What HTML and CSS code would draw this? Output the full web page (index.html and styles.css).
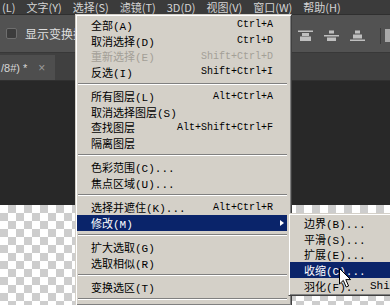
FILE: index.html
```html
<!DOCTYPE html>
<html lang="zh-CN">
<head>
  <meta charset="UTF-8">
  <meta name="viewport" content="width=device-width, initial-scale=1.0">
  <link rel="stylesheet" href="styles.css">
</head>
<body>

<div class="app">
  <div class="menubar">
    <span>(L)</span>
    <span>文字(Y)</span>
    <span>选择(S)</span>
    <span>滤镜(T)</span>
    <span>3D(D)</span>
    <span>视图(V)</span>
    <span>窗口(W)</span>
    <span>帮助(H)</span>
  </div>

  <div class="options">
    <span class="checkbox"></span>
    <span class="option-label">显示变换控件</span>
    <div class="align-tools">
      <svg class="tool-icon" viewBox="0 0 17 12">
        <rect x="1" y="0.5" width="15" height="1.5"/>
        <rect x="5" y="3" width="7" height="3"/>
        <rect x="3" y="6.5" width="11" height="4.5"/>
      </svg>
      <svg class="tool-icon" viewBox="0 0 17 12">
        <rect x="6" y="0.5" width="5" height="3"/>
        <rect x="1" y="5" width="15" height="1.5"/>
        <rect x="4" y="7.5" width="9" height="3.5"/>
      </svg>
      <svg class="tool-icon" viewBox="0 0 17 12">
        <rect x="6" y="0.5" width="5" height="3"/>
        <rect x="4" y="4.5" width="9" height="4"/>
        <rect x="1" y="9.5" width="15" height="1.5"/>
      </svg>
      <span class="tool-sep"></span>
      <span class="tool-stub"></span>
    </div>
  </div>

  <div class="tabs">
    <div class="tab">
      <span>/8#) *</span>
      <span class="tab-close">×</span>
    </div>
  </div>

  <div class="workspace"></div>
  <div class="canvas"></div>

  <!-- 选择 menu -->
  <ul class="menu">
    <li class="item"><span>全部(A)</span><span class="key">Ctrl+A</span></li>
    <li class="item"><span>取消选择(D)</span><span class="key">Ctrl+D</span></li>
    <li class="item disabled"><span>重新选择(E)</span><span class="key">Shift+Ctrl+D</span></li>
    <li class="item"><span>反选(I)</span><span class="key">Shift+Ctrl+I</span></li>
    <li class="sep"></li>
    <li class="item"><span>所有图层(L)</span><span class="key">Alt+Ctrl+A</span></li>
    <li class="item"><span>取消选择图层(S)</span></li>
    <li class="item"><span>查找图层</span><span class="key">Alt+Shift+Ctrl+F</span></li>
    <li class="item"><span>隔离图层</span></li>
    <li class="sep"></li>
    <li class="item"><span>色彩范围(C)...</span></li>
    <li class="item"><span>焦点区域(U)...</span></li>
    <li class="sep"></li>
    <li class="item"><span>选择并遮住(K)...</span><span class="key">Alt+Ctrl+R</span></li>
    <li class="item active has-sub"><span>修改(M)</span><span class="sub-arrow"></span></li>
    <li class="sep"></li>
    <li class="item"><span>扩大选取(G)</span></li>
    <li class="item"><span>选取相似(R)</span></li>
    <li class="sep"></li>
    <li class="item"><span>变换选区(T)</span></li>
    <li class="sep"></li>
  </ul>

  <!-- 修改 submenu -->
  <ul class="menu submenu">
    <li class="item"><span class="label">边界(B)...</span></li>
    <li class="item"><span class="label">平滑(S)...</span></li>
    <li class="item"><span class="label">扩展(E)...</span></li>
    <li class="item active"><span class="label">收缩(C)...</span></li>
    <li class="item"><span class="label">羽化(F)...</span><span>Shift+F6</span></li>
  </ul>

  <svg class="cursor" viewBox="0 0 12 20">
    <path d="M0.5 0.5 V16 L4.3 12.4 L7.2 19 L9.6 18 L6.8 11.6 H11.6 Z"/>
  </svg>
</div>

</body>
</html>
```

FILE: styles.css
```css
* {
  box-sizing: border-box;
}

body {
  margin: 0;
  font-family: 'Noto Sans CJK SC', sans-serif;
  overflow: hidden;
}

.app {
  position: relative;
  width: 390px;
  height: 305px;
  display: flex;
  flex-direction: column;
  overflow: hidden;
  background: #282828;
}

.menubar {
  height: 14px;
  display: flex;
  align-items: center;
  gap: 11px;
  padding-left: 2px;
  background: #3b3b3b;
  color: #d4d4d4;
  font-size: 11px;
  line-height: 14px;
  white-space: nowrap;
}

.options {
  height: 39px;
  display: flex;
  align-items: center;
  padding-left: 6px;
  background: #525252;
  border-top: 1px solid #2f2f2f;
  border-bottom: 1px solid #383838;
}

.checkbox {
  width: 11px;
  height: 11px;
  margin-right: 8px;
  border: 1px solid #6e6e6e;
  border-radius: 2px;
  background: #3c3c3c;
}

.option-label {
  color: #dedede;
  font-size: 12px;
  white-space: nowrap;
}

.align-tools {
  margin-left: auto;
  display: flex;
  align-items: center;
  gap: 9px;
  padding-top: 4px;
}

.tool-icon {
  width: 17px;
  height: 12px;
  fill: #bfbfbf;
}

.tool-sep {
  width: 1px;
  height: 16px;
  margin-left: 5px;
  background: #3a3a3a;
}

.tool-stub {
  width: 5px;
  height: 13px;
  margin-left: -5px;
  background: #a8a8a8;
}

.tabs {
  height: 28px;
  padding-top: 2px;
  background: #404040;
  border-bottom: 1px solid #303030;
}

.tab {
  width: 55px;
  height: 100%;
  display: flex;
  align-items: center;
  gap: 11px;
  padding-left: 1px;
  background: #4e4e4e;
  color: #d6d6d6;
  font-family: 'Liberation Sans', sans-serif;
  font-size: 11px;
  white-space: nowrap;
}

.tab-close {
  color: #9a9a9a;
  font-size: 12px;
}

.workspace {
  height: 124px;
  background: #282828;
}

.canvas {
  flex: 1;
  background: repeating-conic-gradient(#cdcdcd 0 25%, #ffffff 0 50%) 0 0 / 16px 16px;
}

/* classic menus */
.menu {
  position: absolute;
  top: 14px;
  left: 75px;
  width: 217px;
  margin: 0;
  padding: 2px 4px 2px 1px;
  list-style: none;
  background: #d4d0c8;
  border: 1px solid;
  border-color: #d4d0c8 #404040 #404040 #d4d0c8;
  box-shadow: inset 1px 1px #ffffff, inset -1px -1px #808080;
  font-family: 'Liberation Mono', 'Noto Sans CJK SC', monospace;
  font-size: 11px;
  color: #000;
}

.item {
  height: 15.7px;
  display: flex;
  align-items: center;
  padding: 0 14px;
  white-space: nowrap;
}

.key {
  margin-left: auto;
  font-size: 10px;
}

.disabled {
  color: #a39f97;
}

.active {
  background: #0a246a;
  color: #fff;
}

.has-sub {
  padding-right: 3px;
}

.sub-arrow {
  margin-left: auto;
  border-left: 4px solid #fff;
  border-top: 3.5px solid transparent;
  border-bottom: 3.5px solid transparent;
}

.sep {
  height: 8.5px;
  display: flex;
  align-items: center;
  margin-left: 1px;
}

.sep::before {
  content: '';
  flex: 1;
  border-top: 1px solid #808080;
  border-bottom: 1px solid #ffffff;
}

.submenu {
  top: 213px;
  left: 288px;
  width: 120px;
  padding: 1px 0 2px 1px;
}

.submenu .label {
  width: 66px;
  flex-shrink: 0;
}

.cursor {
  position: absolute;
  left: 339px;
  top: 268px;
  width: 12px;
  height: 20px;
  fill: #fff;
  stroke: #000;
  stroke-width: 1;
}
```
